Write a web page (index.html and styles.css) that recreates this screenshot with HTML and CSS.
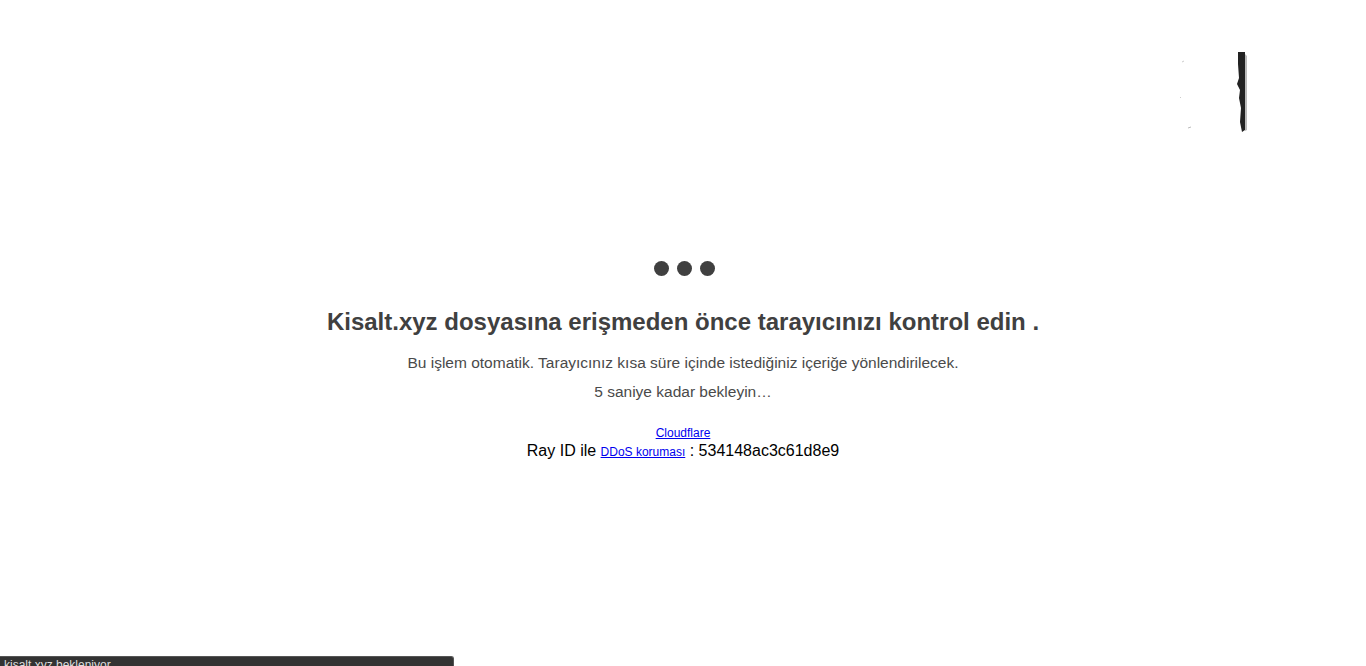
FILE: index.html
```html
<!DOCTYPE html>
<html>
<head>
  <meta charset="utf-8">
  <title>Bir dakika lütfen...</title>
  <link rel="stylesheet" href="styles.css">
</head>
<body>
 <!-- broken logo in the corner -->
 <div class="corner">
  <svg width="80" height="84" viewBox="0 0 80 84">
   <path d="M68 0 L75 0 L75 78 L72 80 L70 70 L71 56 L69 46 L70 38 L67 32 L69 26 L68 12 Z" fill="#222"/>
   <path d="M75 2 L77 4 L77 78 L75 79 Z" fill="#bbb"/>
   <path d="M12 10 L14 9" stroke="#ccc" stroke-width="1"/>
   <path d="M10 46 L11 45" stroke="#ccc" stroke-width="1"/>
   <path d="M18 76 L21 75" stroke="#bbb" stroke-width="1"/>
  </svg>
 </div>

 <div class="wrapper">
  <div class="dots">
   <span class="dot"></span>
   <span class="dot"></span>
   <span class="dot"></span>
  </div>
  <h1 class="title">Kisalt.xyz dosyasına erişmeden önce tarayıcınızı kontrol edin .</h1>
  <p class="note">Bu işlem otomatik. Tarayıcınız kısa süre içinde istediğiniz içeriğe yönlendirilecek.</p>
  <p class="note">5 saniye kadar bekleyin…</p>

  <div class="ray">
   <a href="#" class="small-link">Cloudflare</a><br>
   Ray ID ile <a href="#" class="small-link">DDoS koruması</a> : 534148ac3c61d8e9
  </div>
 </div>

 <div class="status">kisalt.xyz bekleniyor...</div>
</body>
</html>
```

FILE: styles.css
```css
html, body {
  margin: 0;
  padding: 0;
  background: #fff;
  height: 100%;
  overflow: hidden;
}
body {
  font-family: "Liberation Sans", Arial, sans-serif;
  color: #404040;
}
.corner {
  position: absolute;
  top: 52px;
  left: 1170px;
}
.wrapper {
  display: flex;
  flex-direction: column;
  align-items: center;
  padding-top: 261px;
}
.dots {
  display: flex;
  gap: 8px;
  margin-left: 2px;
}
.dot {
  width: 15px;
  height: 15px;
  border-radius: 50%;
  background: #404040;
}
.title {
  font-size: 24px;
  font-weight: bold;
  margin: 31px 0 0;
  line-height: 30px;
}
.note {
  font-size: 15.5px;
  font-weight: 300;
  color: #4a4a4a;
  margin: 16px 0 0;
  line-height: 19px;
}
.note + .note {
  margin-top: 10px;
}
.ray {
  margin-top: 22px;
  text-align: center;
  color: #000;
  font-size: 16px;
  line-height: 17px;
}
.small-link {
  font-size: 12px;
  color: #00e;
}
.status {
  position: absolute;
  left: 0;
  bottom: -9px;
  width: 449px;
  height: 18px;
  padding-left: 4px;
  background: #333;
  border-top: 1px solid #555;
  border-right: 1px solid #555;
  border-top-right-radius: 3px;
  color: #ddd;
  font-size: 12px;
  line-height: 16px;
}
```
